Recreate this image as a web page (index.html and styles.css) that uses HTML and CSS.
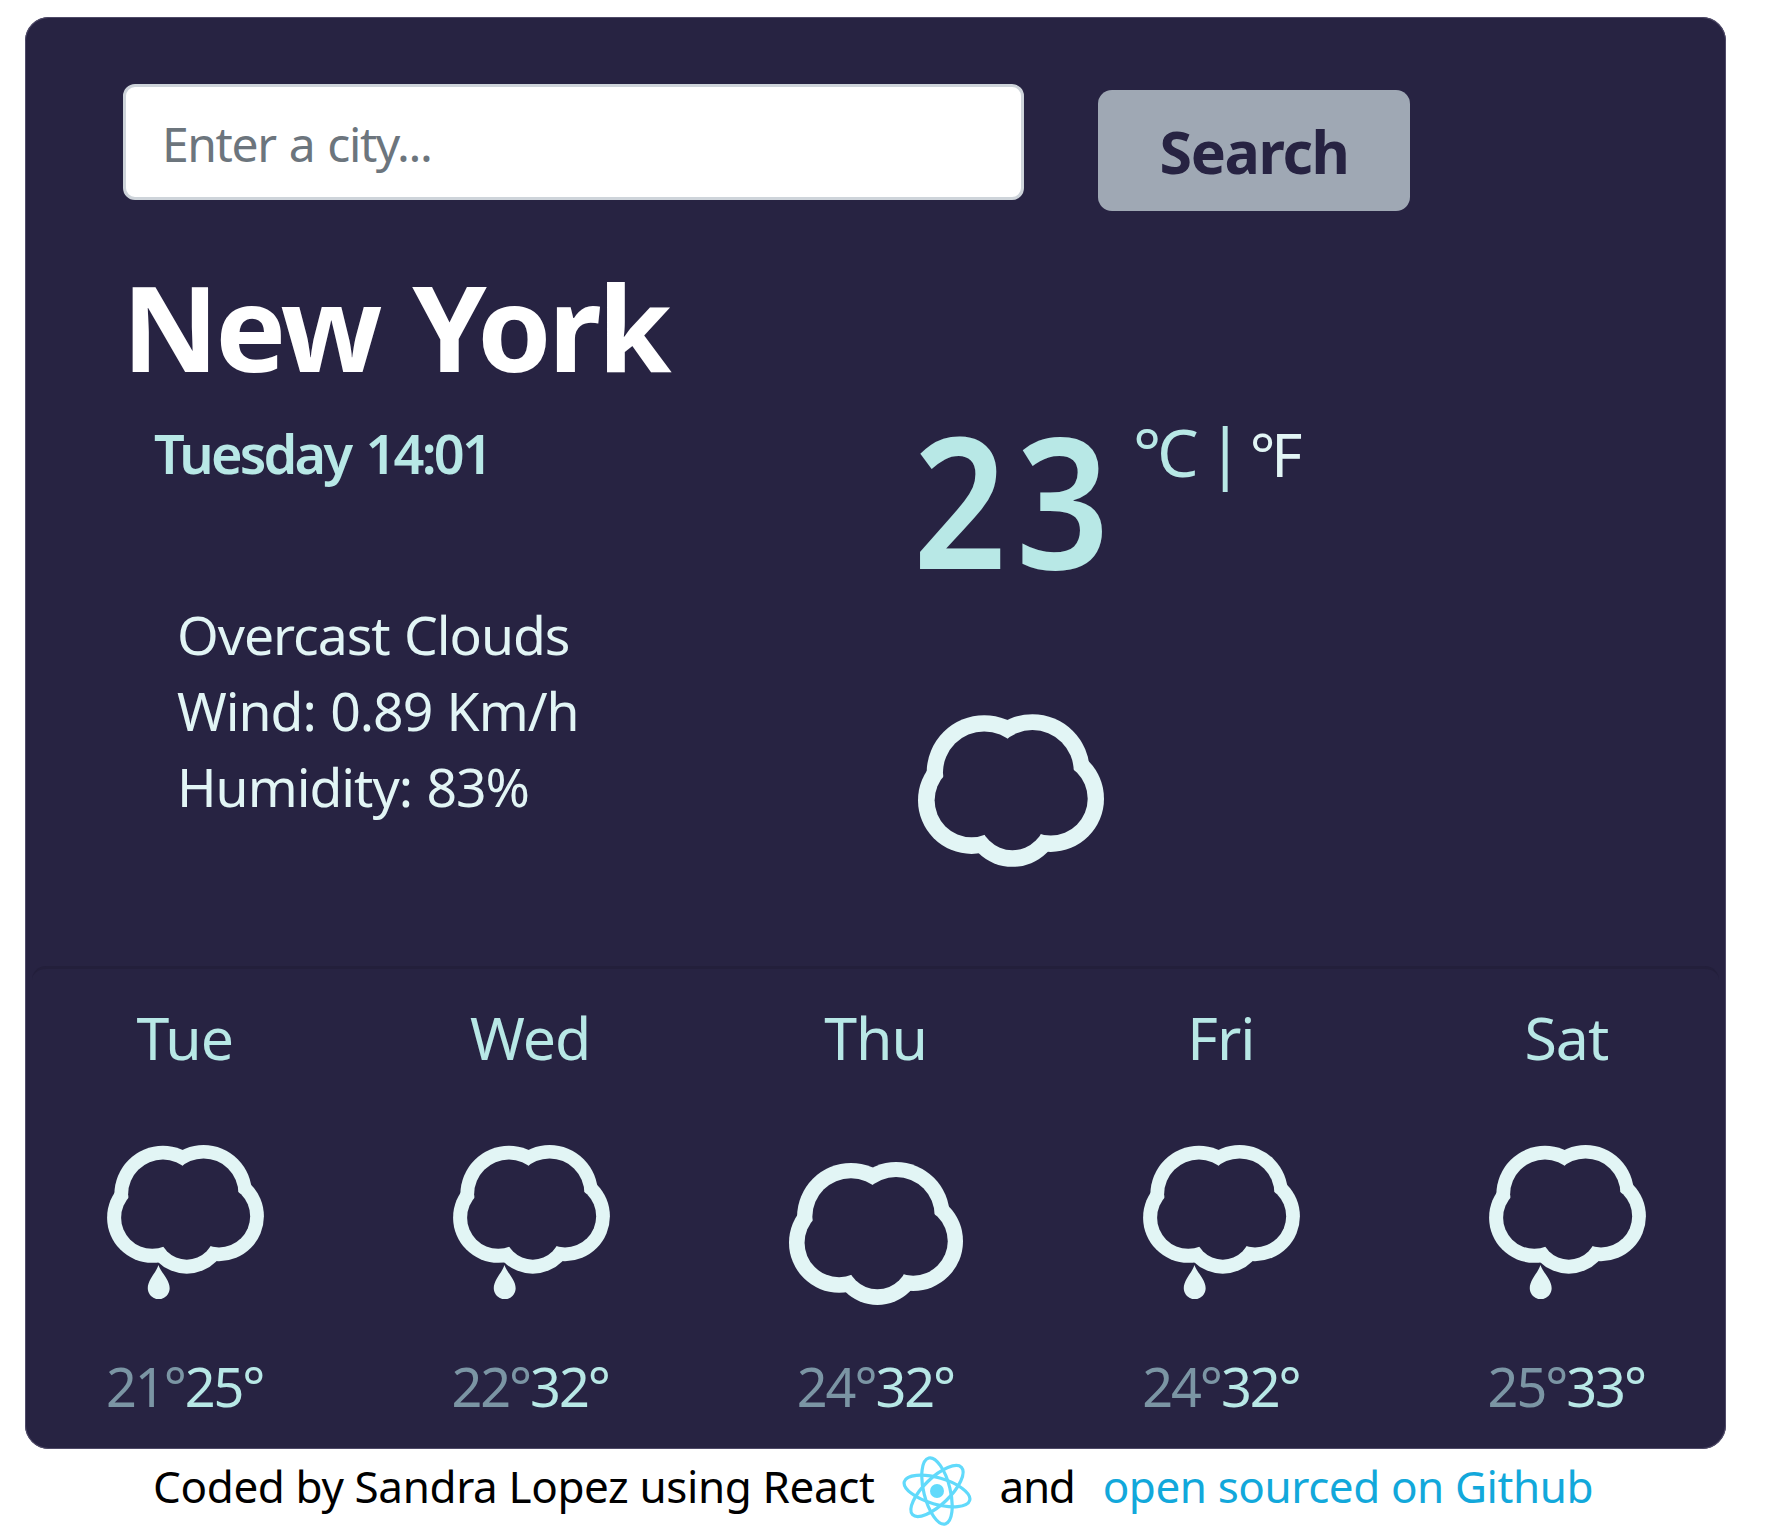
FILE: index.html
```html
<!DOCTYPE html>
<html lang="en">
<head>
<meta charset="utf-8">
<title>Weather</title>
<link rel="stylesheet" href="styles.css">
</head>
<body>
<svg class="defs" width="0" height="0" aria-hidden="true">
  <defs>
    <mask id="hollow" maskUnits="userSpaceOnUse" x="100" y="930" width="600" height="600">
      <rect x="100" y="930" width="600" height="600" fill="#fff"/>
      <circle cx="313" cy="1117" r="124"/>
      <circle cx="458" cy="1113" r="124"/>
      <circle cx="513" cy="1195" r="111"/>
      <circle cx="275" cy="1200" r="111"/>
      <circle cx="398" cy="1251" r="99"/>
    </mask>
    <g id="cloud">
      <g mask="url(#hollow)">
        <circle cx="313" cy="1117" r="173"/>
        <circle cx="458" cy="1113" r="172"/>
        <circle cx="513" cy="1195" r="160"/>
        <circle cx="275" cy="1200" r="161"/>
        <circle cx="398" cy="1253" r="147"/>
      </g>
    </g>
    <g id="rain">
      <use href="#cloud"/>
      <path d="M297 1369C289 1396 259 1421 259 1452A39 39 0 0 0 337 1452C337 1421 306 1396 297 1369Z"/>
    </g>
  </defs>
</svg>
<main class="card">
  <section class="current">
    <form class="search">
      <input class="search-input" type="text" placeholder="Enter a city...">
      <button class="search-button" type="button">Search</button>
    </form>
    <h1 class="city">New York</h1>
    <div class="overview">
      <div class="info">
        <div class="date">Tuesday 14:01</div>
        <ul class="details">
          <li>Overcast Clouds</li>
          <li>Wind: 0.89 Km/h</li>
          <li>Humidity: 83%</li>
        </ul>
      </div>
      <div class="conditions">
        <div class="temperature">
          <span class="degrees">23</span>
          <span class="celsius">°C</span>
          <span class="bar">|</span>
          <span class="fahrenheit">°F</span>
        </div>
        <svg class="current-icon" viewBox="114 941 559 459"><use href="#cloud"/></svg>
      </div>
    </div>
  </section>
  <section class="forecast">
    <div class="days">
      <div class="day">
        <div class="day-name">Tue</div>
        <div class="day-icon"><svg class="icon-rain" viewBox="114 941 559 549"><use href="#rain"/></svg></div>
        <div class="day-temps"><span class="low">21°</span><span class="high">25°</span></div>
      </div>
      <div class="day">
        <div class="day-name">Wed</div>
        <div class="day-icon"><svg class="icon-rain" viewBox="114 941 559 549"><use href="#rain"/></svg></div>
        <div class="day-temps"><span class="low">22°</span><span class="high">32°</span></div>
      </div>
      <div class="day">
        <div class="day-name">Thu</div>
        <div class="day-icon"><svg class="icon-cloud" viewBox="114 941 559 459"><use href="#cloud"/></svg></div>
        <div class="day-temps"><span class="low">24°</span><span class="high">32°</span></div>
      </div>
      <div class="day">
        <div class="day-name">Fri</div>
        <div class="day-icon"><svg class="icon-rain" viewBox="114 941 559 549"><use href="#rain"/></svg></div>
        <div class="day-temps"><span class="low">24°</span><span class="high">32°</span></div>
      </div>
      <div class="day">
        <div class="day-name">Sat</div>
        <div class="day-icon"><svg class="icon-rain" viewBox="114 941 559 549"><use href="#rain"/></svg></div>
        <div class="day-temps"><span class="low">25°</span><span class="high">33°</span></div>
      </div>
    </div>
  </section>
</main>
<footer class="footer">
  <span class="credit">Coded by Sandra Lopez using React</span>
  <svg class="react" viewBox="-36 -36 72 72">
    <circle r="7" fill="#61dafb"/>
    <g class="orbits" transform="rotate(16)">
      <ellipse rx="34" ry="13.2"/>
      <ellipse rx="34" ry="13.2" transform="rotate(60)"/>
      <ellipse rx="34" ry="13.2" transform="rotate(120)"/>
    </g>
  </svg>
  <span class="and">and</span>
  <a class="source">open sourced on Github</a>
</footer>
</body>
</html>
```
FILE: styles.css
```css
* { box-sizing: border-box; }
body {
  margin: 0;
  padding: 17px 40px 0 25px;
  background: #fff;
  font-family: "Noto Sans", "Open Sans", sans-serif;
  height: 1530px;
  overflow: hidden;
}
svg { display: block; flex: none; }
.defs { position: absolute; }
.card {
  height: 1432px;
  border-radius: 24px;
  background: #272342;
  box-shadow: inset 0 0 0 1px #4f4a68;
}
.current { height: 949px; padding: 67px 97px 0; }
.search { display: flex; align-items: flex-start; gap: 74px; padding-left: 1px; height: 128px; }
.search-input {
  width: 901px;
  height: 116px;
  padding: 2px 36px 0;
  border: 3px solid #ced4da;
  border-radius: 12px;
  background: #fff;
  font: 400 48px "Noto Sans", "Open Sans", sans-serif;
  letter-spacing: -1.4px;
  word-spacing: 2px;
}
.search-input::placeholder { color: #6c757d; opacity: 1; }
.search-button {
  width: 312px;
  height: 121px;
  margin-top: 6px;
  padding: 0;
  border: 0;
  border-radius: 14px;
  background: #9fa8b4;
  color: #272342;
  font: 700 59px "Noto Sans", "Open Sans", sans-serif;
  letter-spacing: -1.34px;
}
.city {
  margin: 54px 0 0;
  color: #fff;
  font-size: 119px;
  font-weight: 700;
  line-height: 120px;
  letter-spacing: -3.5px;
  word-spacing: 6px;
}
.overview { display: grid; grid-template-columns: 791px 1fr; }
.info { padding: 37px 0 0 32px; }
.date {
  color: #b8e8e6;
  font-size: 54px;
  font-weight: 600;
  line-height: 60px;
  letter-spacing: -2.78px;
  word-spacing: 4px;
}
.details {
  margin: 113.5px 0 0 23px;
  padding: 0;
  list-style: none;
  color: #e2f5f5;
  font-size: 53.5px;
  line-height: 76.2px;
  letter-spacing: -1.02px;
  word-spacing: 1.5px;
}
.conditions { padding-top: 21px; color: #b8e8e6; }
.temperature { display: flex; align-items: flex-start; height: 182px; }
.degrees {
  width: 188px;
  font-size: 182px;
  font-weight: 600;
  line-height: 182px;
  letter-spacing: 10px;
  transform: scaleX(0.9);
  transform-origin: left;
}
.celsius, .bar, .fahrenheit { margin-top: 4px; font-size: 66px; line-height: 80px; }
.celsius { margin-left: 32px; letter-spacing: -4.2px; }
.bar { margin: 3px 0 0 12.5px; }
.fahrenheit { margin: 7px 0 0 6.3px; color: #e2f5f5; font-size: 60px; letter-spacing: -4.2px; }
.current-icon { width: 186px; height: 153px; margin: 125px 0 0 5px; fill: #e2f5f5; }
.forecast {
  height: 483px;
  margin: 0 7px;
  border-top: 3px solid #231f3b;
  border-radius: 14px 14px 0 0;
}
.days { display: grid; grid-template-columns: repeat(5, 1fr); margin: 0 -20px; }
.day { display: flex; flex-direction: column; align-items: center; padding-top: 27.5px; }
.day-name {
  color: #b8e8e6;
  font-size: 59px;
  line-height: 80px;
  letter-spacing: -1px;
}
.day-icon { height: 161px; margin: 68.5px 0 45px 2px; fill: #e2f5f5; }
.icon-rain { width: 157px; height: 154px; }
.icon-cloud { width: 174px; height: 143px; margin-top: 17px; }
.day-temps { font-size: 54px; line-height: 70px; letter-spacing: -2.07px; }
.low { color: #7b95a4; }
.high { color: #b8e8e6; }
.footer {
  display: flex;
  align-items: flex-start;
  padding: 7px 0 0 128px;
  color: #000;
  font-size: 44px;
  line-height: 60px;
  white-space: nowrap;
}
.credit { letter-spacing: -0.37px; }
.react { width: 72px; height: 72px; margin: -1px 27px 0 26px; }
.orbits { fill: none; stroke: #61dafb; stroke-width: 3.2; }
.and { letter-spacing: -1.3px; }
.source { margin-left: 28px; color: #12a8db; letter-spacing: -0.42px; }
```
